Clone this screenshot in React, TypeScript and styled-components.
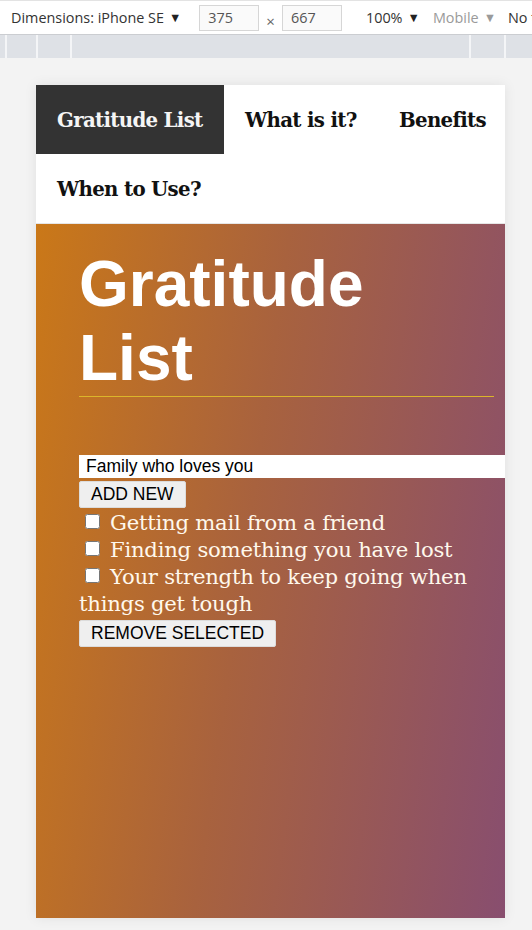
import React, { useState } from "react";
import styled, { createGlobalStyle } from "styled-components";

const GlobalStyle = createGlobalStyle`
  html, body { margin: 0; padding: 0; }
  body {
    background: #f3f3f3;
    width: 532px;
    height: 930px;
    overflow: hidden;
    font-family: "Open Sans", "Noto Sans", sans-serif;
  }
`;

const Shell = styled.div`
  display: flex;
  flex-direction: column;
  width: 532px;
  height: 930px;
`;

const Toolbar = styled.div`
  display: flex;
  align-items: center;
  height: 33px;
  background: #ffffff;
  border-top: 1px solid #e3e3e3;
  border-bottom: 1px solid #cbcdd1;
  padding-left: 11px;
  white-space: nowrap;
  overflow: hidden;
  font-family: "Open Sans", "Noto Sans", sans-serif;
  font-size: 14.4px;
  color: #333;
`;

const ToolLabel = styled.span<{ $muted?: boolean; $ml?: number }>`
  flex-shrink: 0;
  color: ${(p) => (p.$muted ? "#9a9a9a" : "#333")};
  margin-left: ${(p) => p.$ml ?? 0}px;
`;

const Caret = styled.span<{ $muted?: boolean }>`
  flex-shrink: 0;
  font-size: 12.5px;
  margin-left: 5px;
  color: ${(p) => (p.$muted ? "#9a9a9a" : "#222")};
`;

const DimBox = styled.div<{ $ml: number }>`
  flex-shrink: 0;
  width: 60px;
  height: 26px;
  box-sizing: border-box;
  margin-left: ${(p) => p.$ml}px;
  border: 1px solid #d6d6d6;
  background: #fafafa;
  color: #555;
  padding-left: 8px;
  display: flex;
  align-items: center;
`;

const Times = styled.span`
  flex-shrink: 0;
  margin: 6px 7px 0 7px;
  color: #666;
  font-size: 15px;
`;

const Ruler = styled.div`
  position: relative;
  height: 23px;
  background: #dee1e6;
`;

const Tick = styled.div`
  position: absolute;
  top: 0;
  bottom: 0;
  width: 1.5px;
  background: #f4f5f7;
`;

const Stage = styled.div`
  flex: 1;
  padding: 27px 0 0 36px;
`;

const Device = styled.div`
  width: 469px;
  height: 833px;
  display: flex;
  flex-direction: column;
  overflow: hidden;
  box-shadow: 0 0 12px rgba(0, 0, 0, 0.08);
`;

const Nav = styled.nav`
  display: flex;
  flex-wrap: wrap;
  background: #ffffff;
  border-bottom: 1px solid #e6e6e6;
`;

const NavItem = styled.a<{ $active?: boolean; $w: number }>`
  width: ${(p) => p.$w}px;
  height: 69px;
  box-sizing: border-box;
  padding-left: 21px;
  display: flex;
  align-items: center;
  background: ${(p) => (p.$active ? "#333333" : "transparent")};
  color: ${(p) => (p.$active ? "#f5f5f5" : "#111")};
  font-family: "DejaVu Serif", serif;
  font-weight: 700;
  font-size: 19.8px;
  letter-spacing: -0.7px;
  text-decoration: none;
`;

const Hero = styled.main`
  flex: 1;
  background: linear-gradient(98deg, #ca7818 0%, #a8623e 45%, #884e6f 100%);
  padding: 24px 0 0 43px;
  box-sizing: border-box;
`;

const Title = styled.h1`
  margin: 0 11px 58px 0;
  padding-bottom: 1px;
  border-bottom: 1px solid #dcb52a;
  color: #ffffff;
  font-family: "Liberation Sans", Arial, sans-serif;
  font-weight: 700;
  font-size: 64px;
  line-height: 73.5px;
`;

const TextField = styled.input`
  display: block;
  width: 445px;
  height: 23px;
  box-sizing: border-box;
  border: none;
  outline: none;
  padding: 0 7px;
  background: #ffffff;
  color: #000;
  font-family: "Liberation Sans", Arial, sans-serif;
  font-size: 17.5px;
`;

const Button = styled.button`
  display: block;
  height: 27px;
  margin-top: 3px;
  padding: 0 11px;
  box-sizing: border-box;
  border: 1px solid #dcdcdc;
  border-radius: 2px;
  background: #efefef;
  color: #000;
  font-family: "Liberation Sans", Arial, sans-serif;
  font-size: 17.5px;
  line-height: 25px;
`;

const List = styled.ul`
  list-style: none;
  margin: 1px 11px 0 0;
  padding: 0;
`;

const Item = styled.li`
  color: #fff8ec;
  font-family: "DejaVu Serif", serif;
  font-size: 21.2px;
  line-height: 27px;
  letter-spacing: -0.25px;
`;

const Check = styled.input`
  width: 15px;
  height: 15px;
  margin: 0 10px 0 6px;
  vertical-align: 1px;
`;

const ticks = [5, 36, 70, 469, 504];

export default function App() {
  const [value, setValue] = useState("Family who loves you");
  const items = [
    "Getting mail from a friend",
    "Finding something you have lost",
    "Your strength to keep going when things get tough",
  ];
  return (
    <Shell>
      <GlobalStyle />
      <Toolbar>
        <ToolLabel>Dimensions: iPhone SE</ToolLabel>
        <Caret>▼</Caret>
        <DimBox $ml={18}>375</DimBox>
        <Times>×</Times>
        <DimBox $ml={0}>667</DimBox>
        <ToolLabel $ml={24}>100%</ToolLabel>
        <Caret>▼</Caret>
        <ToolLabel $muted $ml={13}>Mobile</ToolLabel>
        <Caret $muted>▼</Caret>
        <ToolLabel $ml={12}>No t</ToolLabel>
      </Toolbar>
      <Ruler>
        {ticks.map((x) => (
          <Tick key={x} style={{ left: x }} />
        ))}
      </Ruler>
      <Stage>
        <Device>
          <Nav>
            <NavItem $active $w={188}>Gratitude List</NavItem>
            <NavItem $w={154}>What is it?</NavItem>
            <NavItem $w={127}>Benefits</NavItem>
            <NavItem $w={200}>When to Use?</NavItem>
          </Nav>
          <Hero>
            <Title>
              Gratitude
              <br />
              List
            </Title>
            <TextField value={value} onChange={(e) => setValue(e.target.value)} />
            <Button>ADD NEW</Button>
            <List>
              {items.map((t) => (
                <Item key={t}>
                  <Check type="checkbox" />
                  {t}
                </Item>
              ))}
            </List>
            <Button>REMOVE SELECTED</Button>
          </Hero>
        </Device>
      </Stage>
    </Shell>
  );
}
